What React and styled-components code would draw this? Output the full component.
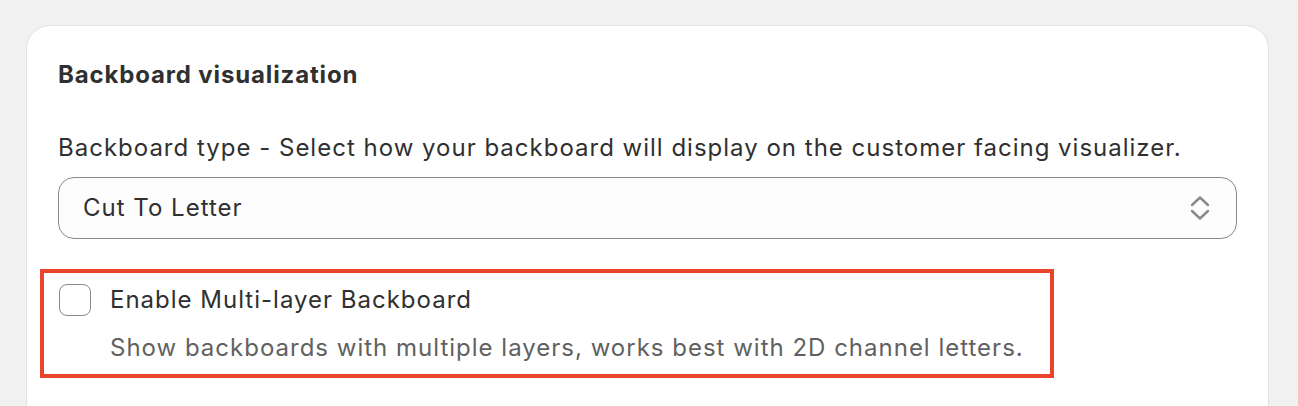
import styled, { createGlobalStyle } from "styled-components";

const GlobalStyle = createGlobalStyle`
  html, body {
    margin: 0;
    padding: 0;
    background: #f1f1f1;
    font-family: Inter, "Noto Sans", "Liberation Sans", sans-serif;
    -webkit-font-smoothing: antialiased;
  }
`;

const Page = styled.div`
  padding: 25px 29px 0 26px;
  height: 406px;
  box-sizing: border-box;
  overflow: hidden;
`;

const Card = styled.section`
  background: #ffffff;
  border: 1px solid #e3e3e3;
  border-radius: 24px;
  padding: 29px 31px 60px;
  min-height: 500px;
  box-sizing: border-box;
  color: #303030;
`;

const Title = styled.h2`
  margin: 0 0 33px;
  font-size: 24px;
  line-height: 40px;
  font-weight: 650;
  letter-spacing: 0.85px;
  color: #303030;
`;

const BodyText = styled.span`
  font-size: 24px;
  line-height: 40px;
  letter-spacing: 1px;
  color: ${(p) => (p.$muted ? "#616161" : "#303030")};
`;

const FieldLabel = styled(BodyText).attrs({ as: "label" })`
  display: block;
  margin-bottom: 9px;
`;

const SelectBox = styled.div`
  display: flex;
  align-items: center;
  justify-content: space-between;
  height: 62px;
  box-sizing: border-box;
  border: 1px solid #8a8a8a;
  border-radius: 16px;
  background: #fdfdfd;
  padding: 0 26px 0 24px;
`;

const Highlight = styled.div`
  margin: 30px 0 0 -18px;
  width: 1014px;
  box-sizing: border-box;
  border: 4px solid #e8452c;
  padding: 7px 20px 6px 15px;
`;

const CheckRow = styled.div`
  display: flex;
  align-items: center;
  gap: 19px;
`;

const Box = styled.span`
  width: 32px;
  height: 32px;
  box-sizing: border-box;
  border: 1.5px solid #8a8a8a;
  border-radius: 8px;
  background: #ffffff;
  flex: none;
`;

const Help = styled(BodyText).attrs({ as: "p" })`
  margin: 8px 0 0 51px;
`;

const SelectIcon = () => (
  <svg width="20" height="26" viewBox="0 0 20 26" fill="none">
    <polyline
      points="2,10 10,2.5 18,10"
      stroke="#8a8a8a"
      strokeWidth="2.4"
      strokeLinecap="round"
      strokeLinejoin="round"
    />
    <polyline
      points="2,16 10,23.5 18,16"
      stroke="#8a8a8a"
      strokeWidth="2.4"
      strokeLinecap="round"
      strokeLinejoin="round"
    />
  </svg>
);

export default function App() {
  return (
    <>
      <GlobalStyle />
      <Page>
        <Card>
          <Title>Backboard visualization</Title>
          <FieldLabel>
            Backboard type - Select how your backboard will display on the
            customer facing visualizer.
          </FieldLabel>
          <SelectBox>
            <BodyText>Cut To Letter</BodyText>
            <SelectIcon />
          </SelectBox>
          <Highlight>
            <CheckRow>
              <Box />
              <BodyText>Enable Multi-layer Backboard</BodyText>
            </CheckRow>
            <Help $muted>
              Show backboards with multiple layers, works best with 2D channel
              letters.
            </Help>
          </Highlight>
        </Card>
      </Page>
    </>
  );
}
